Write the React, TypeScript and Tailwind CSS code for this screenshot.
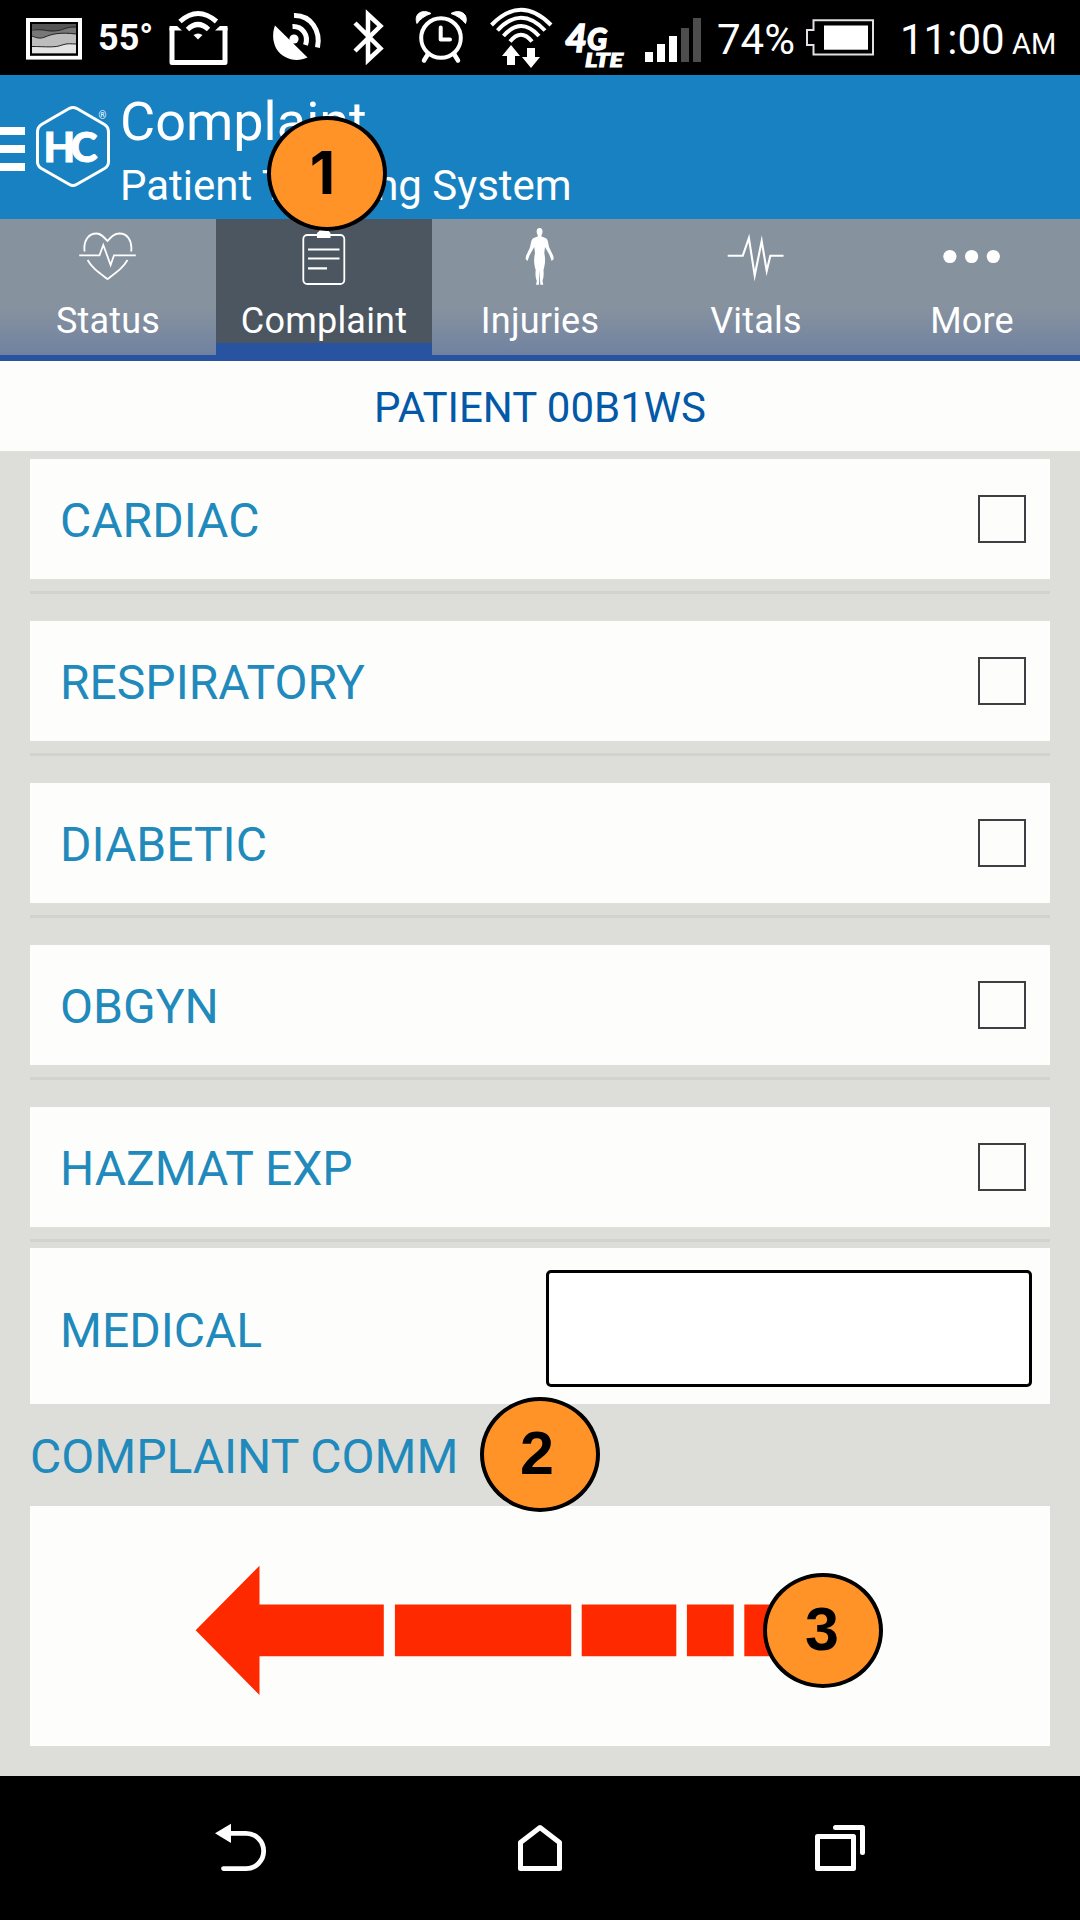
import React from "react";

type GlyphProps = {
  box: string;
  className: string;
  children: React.ReactNode;
};

function Glyph({ box, className, children }: GlyphProps) {
  return (
    <svg viewBox={box} className={`shrink-0 ${className}`} fill="none" aria-hidden="true">
      {children}
    </svg>
  );
}

function StatusBar() {
  return (
    <div className="flex h-[75px] items-start bg-black whitespace-nowrap text-white">
      <Glyph box="26 0 56 75" className="ml-[26px] h-[75px] w-[56px]">
        <rect x="28" y="20" width="52" height="37.6" stroke="#fff" strokeWidth="4" />
        <rect x="31.8" y="24" width="44.6" height="29.5" fill="#bdbdbd" />
        <path d="M32 24H76V27C63 27 64 31 52 31 44 31 41 29.500 32 29.500Z" fill="#555" />
        <path d="M32 30C44 29 46 31 52 31 64 31 63 27 76 27V34C60 32 52 34 45 37 40 39 37 38 32 36Z" fill="#777" />
        <path d="M32 46.500C45 46.500 55 48 62 45 68 43 71 44 76 44V53.500H32Z" fill="#e4e4e4" />
        <path d="M32 30C44 29 46 31 52 31 64 31 63 27 76 27M32 36C37 38 40 39 45 37 52 34 60 32 76 34M32 46.500C45 46.500 55 48 62 45 68 43 71 44 76 44" stroke="#222" />
        <rect x="31" y="23" width="46" height="31.500" stroke="#000" strokeWidth="2" />
      </Glyph>
      <div className="mt-[17px] ml-[16px] w-[55px] text-[36px] leading-[42px] font-bold">55°</div>
      <Glyph box="169 0 60 75" className="ml-[16px] h-[75px] w-[60px]">
        <path d="M172 28V62.500H225V28" stroke="#fff" strokeWidth="5" strokeLinejoin="round" />
        <path d="M169.500 26H177L182 30.500H169.500ZM227.500 26H220L215 30.500H227.500Z" fill="#fff" />
        <path d="M180 21.500Q198 5.500 216.500 21.500M187.500 29.500Q198 19.500 208.500 29.500" stroke="#fff" strokeWidth="5" />
        <path d="M193.500 35Q198 32 202.500 35L198 39.500Z" fill="#fff" />
      </Glyph>
      <Glyph box="272 0 52 75" className="ml-[43px] h-[75px] w-[52px]">
        <path d="M275 25.500 307.500 57.500C296 63 283 59 276.500 49 272 41 272.500 32 275 25.500Z" fill="#fff" />
        <circle cx="294" cy="39" r="4.600" fill="#fff" />
        <path d="M289 44 294 39" stroke="#fff" strokeWidth="5" />
        <path d="M292.500 26.500C302 26 309 35 305.500 45M294 15.500C311 15 321 31 317.500 47.500" stroke="#fff" strokeWidth="5" />
      </Glyph>
      <Glyph box="352 0 34 75" className="ml-[28px] h-[75px] w-[34px]">
        <path d="M355 23 380.500 48.500 368 60V14.500L380.500 26 355 51" stroke="#fff" strokeWidth="4.500" />
      </Glyph>
      <Glyph box="414 0 54 75" className="ml-[28px] h-[75px] w-[54px]">
        <circle cx="441" cy="38" r="19.800" stroke="#fff" strokeWidth="4" />
        <path d="M440.700 27.500V39.600H450" stroke="#fff" strokeWidth="4" strokeLinecap="round" strokeLinejoin="round" />
        <path d="M417 23.500C413.500 14 422 8.500 431 13.500 425 15.500 420 19 417 23.500ZM465.500 23.500C469 14 460 8.500 451 13.500 457 15.500 462 19 465.500 23.500Z" fill="#fff" stroke="#fff" />
        <path d="M428 54 424 60.500M454 54 458 60.500" stroke="#fff" strokeWidth="4.500" strokeLinecap="round" />
      </Glyph>
      <Glyph box="489 0 65 75" className="ml-[21px] h-[75px] w-[65px]">
        <path d="M491.500 25Q521-5.500 551 25M497.500 30.500Q521 5 545 30.500M503.500 36Q521 16 539 36M510 41.500Q521 28 532 41.500" stroke="#fff" strokeWidth="4" />
        <path d="M511 45 520 56H515V65H507V56H502ZM527 48H535V57H540L531 68 522 57H527Z" fill="#fff" />
      </Glyph>
      <Glyph box="564 0 64 75" className="ml-[10px] h-[75px] w-[64px]">
        <g fill="#fff" stroke="#fff" fontFamily="Lato" fontStyle="italic" fontWeight="900">
          <text y="52" fontSize="38" strokeWidth="1.300">
            <tspan x="565">4</tspan>
            <tspan x="587" y="50" fontSize="30">G</tspan>
          </text>
          <text x="585" y="67" fontSize="18.500" strokeWidth="1" textLength="38" lengthAdjust="spacingAndGlyphs">LTE</text>
        </g>
      </Glyph>
      <Glyph box="645 0 56 75" className="ml-[17px] h-[75px] w-[56px]">
        <path d="M645 52h8v10h-8zM657 44h8v18h-8zM669 36h8v26h-8z" fill="#fff" />
        <path d="M681 28h8v34h-8zM693 18h8v44h-8z" fill="#4d4d4d" />
      </Glyph>
      <div className="mt-[15px] ml-[16px] w-[79px] text-[42px] leading-[49px]">74%</div>
      <Glyph box="805 0 70 75" className="ml-[9px] h-[75px] w-[70px]">
        <path d="M813.500 20.300H873V54.500H813.500V45H807V30H813.500Z" stroke="#e4dfe4" strokeWidth="2" />
        <rect x="824" y="25.500" width="44" height="24.200" fill="#fff" />
      </Glyph>
      <div className="mt-[15px] ml-[25px] flex items-baseline text-[42px] leading-[49px]">
        <span className="w-[112px]">11:00</span>
        <span className="text-[29px]">AM</span>
      </div>
    </div>
  );
}

function Header() {
  return (
    <header className="flex h-[144px] bg-[#1781c2] text-white">
      <div className="mt-[52px] flex w-[25px] flex-col gap-[10px]">
        <div className="h-2 bg-white" />
        <div className="h-2 bg-white" />
        <div className="h-2 bg-white" />
      </div>
      <Glyph box="35 104 78 86" className="mt-[29px] ml-[10px] h-[86px] w-[78px]">
        <path
          d="M69.500 108.300Q73 106.500 76.500 108.300L104.500 124.500Q108.500 127 108.500 132V162Q108.500 166 104.500 168.500L76.500 184.500Q73 186.500 69.500 184.500L41.500 168.500Q37.500 166 37.500 162V132Q37.500 127 41.500 124.500Z"
          stroke="#fff"
          strokeWidth="3"
        />
        <g fill="#fff" fontFamily="Lato" fontWeight="900">
          <text y="161.500" fontSize="41" stroke="#fff" strokeWidth="0.800">
            <tspan x="43.500">H</tspan>
            <tspan x="70.500">C</tspan>
          </text>
          <text x="98.500" y="119" fontSize="10" fontFamily="Roboto" fontWeight="400">®</text>
        </g>
      </Glyph>
      <div className="ml-[7px] whitespace-nowrap">
        <h1 className="mt-[15px] text-[54px] leading-[64px]">Complaint</h1>
        <p className="mt-[7px] text-[42px] leading-[50px]">Patient Tracking System</p>
      </div>
    </header>
  );
}

const tabs = [
  {
    label: "Status",
    box: "78 224 60 64",
    icon: (
      <path
        d="M84.600 251.500C83 240 89 233.500 96.500 233.500 101 233.500 104 237 107.500 241 111 237 114 233.500 119.500 233.500 127 233.500 132.500 240 131.200 251.500M87.600 260C92 268 98 272 107.500 279 117 272 123 268 127.500 260M79.200 255.300H99.500L103.300 245 110.600 265 114 255.300H135.800"
        stroke="#fff"
        strokeWidth="1.800"
      />
    ),
  },
  {
    label: "Complaint",
    box: "294 224 60 64",
    icon: (
      <>
        <rect x="303.300" y="235" width="41" height="49" rx="4" stroke="#fff" strokeWidth="1.800" />
        <path d="M308 249.500H339.500M308 258.500H339.500M308 268.300H327" stroke="#fff" strokeWidth="2.200" />
        <path d="M317 233Q320 231.500 320 229H328Q328 231.500 330.500 233V238H317Z" fill="#fff" />
      </>
    ),
  },
  {
    label: "Injuries",
    box: "510 224 60 64",
    icon: (
      <path
        d="M539.600 228C542.500 228 543 231 542.200 233.500L541.200 236.300 546 238.200C548.500 240 548 244 549.500 248L553.300 256 553.700 259 551.700 261 549.500 255 545 247 544.300 253C546 261 544.500 266 543.500 270 544 274 543.500 278 542.500 281L543.300 284.800H540.300L539.600 270 539 284.800H536L536.800 281C535.500 278 535.200 274 535.700 270 534.500 266 533.200 261 535 253L534.200 247 529.700 255 527.500 261 525.600 259 526 256 529.700 248C531.200 244 530.700 240 533.200 238.200L538 236.300 537 233.500C536.200 231 536.700 228 539.600 228Z"
        fill="#fff"
      />
    ),
  },
  {
    label: "Vitals",
    box: "726 224 60 64",
    icon: (
      <path
        d="M727.700 255.700H742.800L748.900 238 754.700 275.500 761.700 241 766.700 271 770.300 255.700H783.500"
        stroke="#fff"
        strokeWidth="2.100"
        strokeMiterlimit="10"
      />
    ),
  },
  {
    label: "More",
    box: "942 224 60 64",
    icon: (
      <g fill="#fff">
        <circle cx="949.900" cy="256.500" r="6.600" />
        <circle cx="971.600" cy="256.500" r="6.600" />
        <circle cx="993.300" cy="256.500" r="6.600" />
      </g>
    ),
  },
];

function Tabs() {
  return (
    <nav className="grid h-[142px] grid-cols-5 text-white">
      {tabs.map((tab, i) => (
        <div
          key={tab.label}
          className={
            i === 1
              ? "flex flex-col items-center border-b-[18px] border-[#2853a0] bg-[#4c5660]"
              : "flex flex-col items-center border-b-[6px] border-[#2853a0] bg-linear-to-b from-[#87929f] from-65% to-[#6f82a0]"
          }
        >
          <Glyph box={tab.box} className="mt-[5px] h-[64px] w-[60px]">
            {tab.icon}
          </Glyph>
          <span className="mt-[12px] text-[36px] leading-[42px] tracking-[0.2px]">{tab.label}</span>
        </div>
      ))}
    </nav>
  );
}

function CheckRow({ label }: { label: string }) {
  return (
    <label className="flex h-[120px] items-center justify-between bg-[#fdfefc] pr-6 pl-[30px]">
      <span className="pt-[4px]">{label}</span>
      <span className="size-[48px] border-2 border-[#3e3f43]" />
    </label>
  );
}

const complaints = ["CARDIAC", "RESPIRATORY", "DIABETIC", "OBGYN", "HAZMAT EXP"];

function Callout({ n, className }: { n: number; className: string }) {
  return (
    <div
      className={`absolute flex h-[115px] w-[120px] items-center justify-center rounded-[50%] border-4 border-black bg-[#ff9328] pb-[2px] leading-none font-bold text-black ${className}`}
    >
      {n}
    </div>
  );
}

export default function App() {
  return (
    <div className="relative flex h-[1920px] w-[1080px] flex-col overflow-hidden bg-[#dddeda] font-[Roboto,sans-serif]">
      <StatusBar />
      <Header />
      <Tabs />
      <div className="flex h-[90px] items-center justify-center bg-[#fdfefc] pt-[2px] text-[42px] text-[#0359a8]">
        PATIENT 00B1WS
      </div>
      <main className="flex flex-1 flex-col px-[30px] pt-2 text-[48px] leading-[56px] text-[#1f8abb]">
        {complaints.map((c, i) => (
          <div key={c}>
            <CheckRow label={c} />
            <div className={i === 4 ? "mt-3 mb-[6px] h-[3px] bg-[#d2d3d1]" : "mt-3 mb-[27px] h-[3px] bg-[#d2d3d1]"} />
          </div>
        ))}
        <div className="flex h-[156px] items-center justify-between bg-[#fdfefc] pr-[18px] pl-[30px]">
          <span className="mt-[9px]">MEDICAL</span>
          <div className="mt-[5px] h-[117px] w-[486px] rounded-[5px] border-3 border-black bg-white" />
        </div>
        <div className="flex h-[102px] items-center pt-1">COMPLAINT COMM</div>
        <div className="h-[240px] bg-[#fdfefc] pt-[57px] pl-[165px]">
          <svg viewBox="195 1563 590 135" className="h-[135px] w-[590px]" fill="#ff2900" aria-hidden="true">
            <path d="M195.600 1630.300 259.500 1565.700V1604.500H383.800V1656.300H259.500V1695Z" />
            <path d="M394.900 1604.500H571.200V1656.300H394.900ZM581.700 1604.500H676.300V1656.300H581.700ZM686.900 1604.500H733.700V1656.300H686.900ZM744.300 1604.500H780V1656.300H744.300Z" />
          </svg>
        </div>
      </main>
      <footer className="flex h-[144px] items-center justify-between bg-black px-[210px]">
        <Glyph box="210 1818 60 60" className="size-[60px]">
          <path d="M215 1833.300 231 1823.700V1843Z" fill="#fff" />
          <path d="M230 1833.300H246A17.650 17.650 0 0 1 246 1868.600H223.500" stroke="#fff" strokeWidth="4.800" strokeLinecap="round" />
        </Glyph>
        <Glyph box="510 1818 60 60" className="size-[60px]">
          <path d="M520.500 1842.500 540 1827.500 559.500 1842.500V1868.600H520.500Z" stroke="#fff" strokeWidth="5" strokeLinejoin="round" />
        </Glyph>
        <Glyph box="810 1818 60 60" className="size-[60px]">
          <path d="M817.500 1836.500H853.500V1868.500H817.500ZM835.500 1827.500H862.500V1852.500" stroke="#fff" strokeWidth="5" strokeLinejoin="round" strokeLinecap="round" />
        </Glyph>
      </footer>
      <Callout n={1} className="top-[116px] left-[267px] pr-[9px] font-['Inter',sans-serif] text-[59px]" />
      <Callout n={2} className="top-[1397px] left-[480px] pr-[6px] font-['Liberation_Sans',sans-serif] text-[61px]" />
      <Callout n={3} className="top-[1573px] left-[763px] pr-[2px] font-['Liberation_Sans',sans-serif] text-[61px]" />
    </div>
  );
}
